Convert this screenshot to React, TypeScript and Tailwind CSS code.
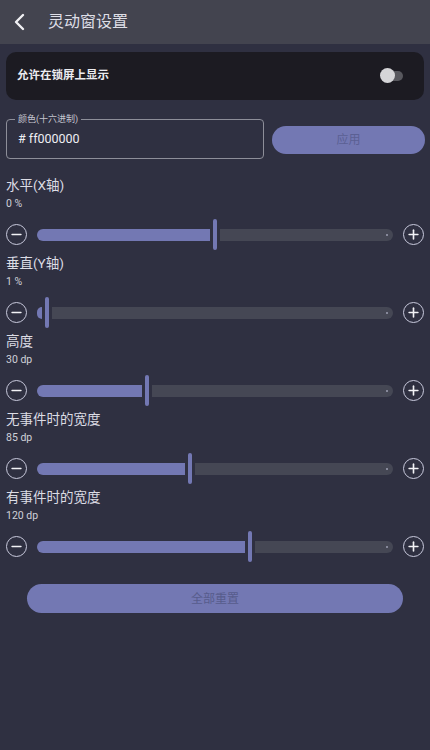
import { Minus, Plus } from "lucide-react";

type SliderItem = {
  label: string;
  value: string;
  fill: number;
};

const sliders: SliderItem[] = [
  { label: "水平(X轴)", value: "0 %", fill: 173 },
  { label: "垂直(Y轴)", value: "1 %", fill: 5 },
  { label: "高度", value: "30 dp", fill: 105 },
  { label: "无事件时的宽度", value: "85 dp", fill: 148 },
  { label: "有事件时的宽度", value: "120 dp", fill: 208 },
];

function RoundButton({ plus }: { plus?: boolean }) {
  return (
    <button className="w-[21px] h-[21px] shrink-0 rounded-full border-[1.5px] border-[#c9cadd] flex items-center justify-center text-[#f2f2f6]">
      {plus ? <Plus size={15} strokeWidth={2.6} /> : <Minus size={15} strokeWidth={2.6} />}
    </button>
  );
}

function SliderRow({ item }: { item: SliderItem }) {
  return (
    <div className="flex flex-col">
      <div className="text-[13.5px] leading-[20px] text-[#dcdce4]">{item.label}</div>
      <div className="text-[10.5px] leading-[18px] text-[#cfd0d9]">{item.value}</div>
      <div className="mt-[6px] h-[31px] flex items-center">
        <RoundButton />
        <div className="flex-1 mx-[10px] flex items-center">
          <div
            className="h-[12px] bg-[#7378b3] rounded-l-full"
            style={{ width: item.fill }}
          />
          <div className="w-[4px] h-[31px] rounded-full bg-[#7378b3] mx-[3px] shrink-0" />
          <div className="flex-1 h-[12px] bg-[#454754] rounded-r-full flex items-center justify-end pr-[5px]">
            <div className="w-[2px] h-[2px] rounded-full bg-[#9c9eb2]" />
          </div>
        </div>
        <RoundButton plus />
      </div>
    </div>
  );
}

export default function App() {
  return (
    <div
      className="w-[430px] h-[750px] bg-[#2f3041] overflow-hidden"
      style={{ fontFamily: 'Roboto, "Noto Sans CJK SC", sans-serif' }}
    >
      <div className="h-[44px] bg-[#43444f] flex items-center">
        <svg width="24" height="24" viewBox="0 0 24 24" className="ml-[8px]" fill="none">
          <path d="M15 5 L8 12 L15 19" stroke="#f0f0f4" strokeWidth="2.4" strokeLinecap="round" strokeLinejoin="round" />
        </svg>
        <div className="ml-[16px] text-[16px] text-[#dedee6]">灵动窗设置</div>
      </div>

      <div className="mx-[6px] mt-[8px] h-[48px] rounded-[10px] bg-[#1c1b22] flex items-center justify-between pl-[11px] pr-[21px]">
        <div className="text-[11.5px] font-bold text-[#ececf0]">允许在锁屏上显示</div>
        <div className="relative w-[23px] h-[16px] flex items-center">
          <div className="ml-[4px] w-[19px] h-[10px] rounded-full bg-[#58585e]" />
          <div className="absolute left-0 top-0 w-[15px] h-[15px] rounded-full bg-[#d5d5d8]" />
        </div>
      </div>

      <div className="mt-[14px] px-[6px] flex items-center gap-[8px]">
        <fieldset className="w-[258px] h-[45px] border border-[#8d8e99] rounded-[4px] px-[11px]">
          <legend className="px-[3px] -ml-[3px] text-[9px] leading-[10px] text-[#c4c5cf]">颜色(十六进制)</legend>
          <div className="text-[12.5px] leading-[20px] text-[#eeeef2] mt-[5px]">
            # ff000000
          </div>
        </fieldset>
        <button className="flex-1 mr-[-1px] h-[28px] mt-[6px] rounded-full bg-[#7378b3] text-[12px] text-[#5b6093]">
          应用
        </button>
      </div>

      <div className="mt-[16px] px-[6px] flex flex-col gap-[3px]">
        {sliders.map((s) => (
          <SliderRow key={s.label} item={s} />
        ))}
      </div>

      <div className="mt-[22px] px-[27px]">
        <button className="w-full h-[29px] rounded-full bg-[#7378b3] text-[12px] text-[#575c8c]">
          全部重置
        </button>
      </div>
    </div>
  );
}
